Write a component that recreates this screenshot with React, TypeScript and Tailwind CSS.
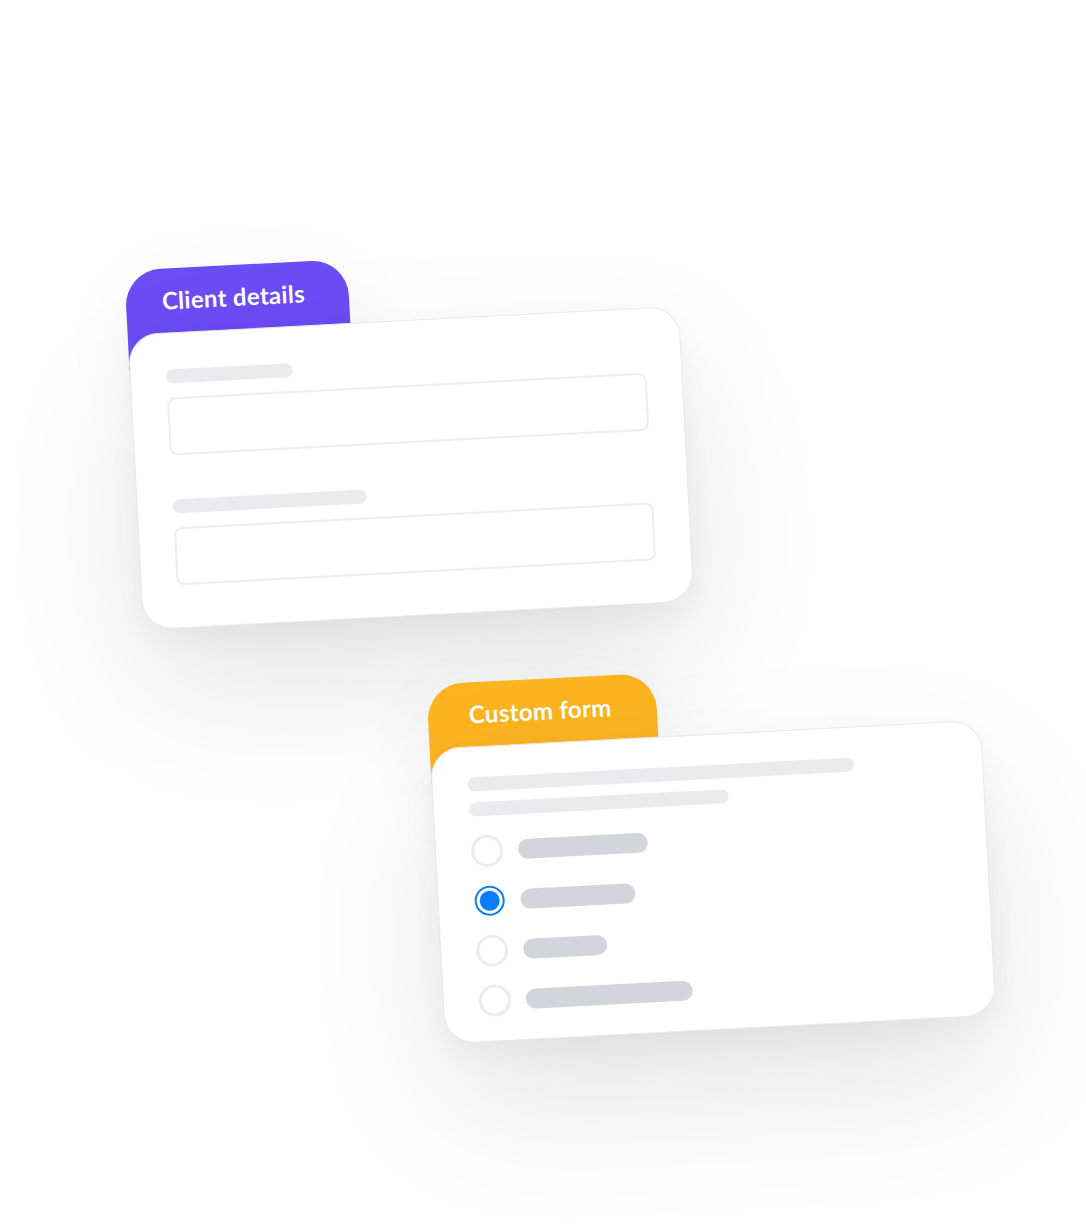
const FONT = "font-['Lato','Noto_Sans',sans-serif]";

function Tab({ label, width, color, padLeft }: { label: string; width: string; color: string; padLeft: string }) {
  return (
    <div className={`h-[100px] -mb-[36px] rounded-t-[36px] shadow-[0_20px_80px_rgba(0,0,0,0.06)] ${width} ${color} ${padLeft}`}>
      <div className="flex h-16 items-center text-[24px] font-bold tracking-[0.3px] text-white">{label}</div>
    </div>
  );
}

const cardBase =
  "relative h-[296px] rounded-[30px] border border-[#e7e7ef] bg-white px-[35px] shadow-[0_60px_140px_rgba(0,0,0,0.11),0_14px_30px_rgba(0,0,0,0.04)]";

function Field({ labelWidth, gapTop }: { labelWidth: string; gapTop: string }) {
  return (
    <div className={gapTop}>
      <div className={`h-[14px] rounded-full bg-[#ebebef] ${labelWidth}`} />
      <div className="mt-[14px] h-[58px] rounded-lg border-2 border-[#ececf1]" />
    </div>
  );
}

const options = [
  { w: "w-[130px]", selected: false },
  { w: "w-[115px]", selected: true },
  { w: "w-[84px]", selected: false },
  { w: "w-[167px]", selected: false },
];

function Radio({ selected }: { selected: boolean }) {
  if (selected) {
    return (
      <span className="flex size-8 shrink-0 items-center justify-center">
        <span className="flex size-[30px] items-center justify-center rounded-full border-2 border-[#0a7cff]">
          <span className="size-[20px] rounded-full bg-[#0a7cff]" />
        </span>
      </span>
    );
  }
  return <span className="size-8 shrink-0 rounded-full border-[3px] border-[#ebebf0]" />;
}

export default function App() {
  return (
    <div className={`flex h-[1224px] w-[1086px] flex-col overflow-hidden bg-white ${FONT}`}>
      {/* Client details card */}
      <div className="ml-[135px] mt-[256px] w-[552px] origin-[276px_212px] -rotate-3">
        <Tab label="Client details" width="w-[223px]" color="bg-[#6c4cf4]" padLeft="pl-[36px]" />
        <div className={`${cardBase} pt-[36px]`}>
          <Field labelWidth="w-[127px]" gapTop="" />
          <Field labelWidth="w-[194px]" gapTop="mt-[44px]" />
        </div>
      </div>

      {/* Custom form card */}
      <div className="ml-[437px] mt-[54px] w-[552px] origin-[276px_212px] -rotate-3">
        <Tab label="Custom form" width="w-[229px]" color="bg-[#fcb520]" padLeft="pl-[41px]" />
        <div className={`${cardBase} pt-[30px]`}>
          <div className="h-[14px] w-[387px] rounded-full bg-[#ebebef]" />
          <div className="mt-[11px] h-[14px] w-[260px] rounded-full bg-[#ebebef]" />
          <div className="mt-[19px] flex flex-col gap-[18px]">
            {options.map((o, i) => (
              <div key={i} className="flex items-center gap-[15px]">
                <Radio selected={o.selected} />
                <div className={`h-5 rounded-full bg-[#d2d6dc] ${o.w}`} />
              </div>
            ))}
          </div>
        </div>
      </div>
    </div>
  );
}
